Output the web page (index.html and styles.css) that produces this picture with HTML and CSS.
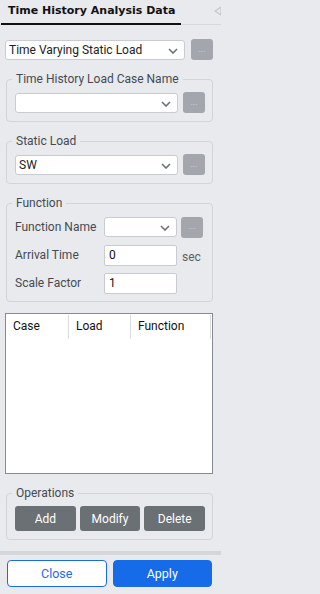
FILE: index.html
```html
<!DOCTYPE html>
<html>
<head>
<meta charset="utf-8">
<link rel="stylesheet" href="styles.css">
</head>
<body>
<div class="panel">
  <div class="tabs">
    <div class="tab">Time History Analysis Data</div>
    <svg class="collapse" width="8" height="10" viewBox="0 0 8 10"><path d="M7 1 L1 5 L7 9 Z" fill="none" stroke="#c4c7cc" stroke-width="1.2"/></svg>
  </div>

  <div class="content">
    <div class="row top-row">
      <div class="select wide">Time Varying Static Load<svg class="chev" width="10" height="6" viewBox="0 0 10 6"><path d="M1 1 L5 5 L9 1" fill="none" stroke="#6b7079" stroke-width="1.6"/></svg></div>
      <button class="dots">...</button>
    </div>

    <fieldset class="group">
      <legend>Time History Load Case Name</legend>
      <div class="row">
        <div class="select wide"><svg class="chev" width="10" height="6" viewBox="0 0 10 6"><path d="M1 1 L5 5 L9 1" fill="none" stroke="#6b7079" stroke-width="1.6"/></svg></div>
        <button class="dots">...</button>
      </div>
    </fieldset>

    <fieldset class="group">
      <legend>Static Load</legend>
      <div class="row">
        <div class="select wide">SW<svg class="chev" width="10" height="6" viewBox="0 0 10 6"><path d="M1 1 L5 5 L9 1" fill="none" stroke="#6b7079" stroke-width="1.6"/></svg></div>
        <button class="dots">...</button>
      </div>
    </fieldset>

    <fieldset class="group func">
      <legend>Function</legend>
      <div class="frow">
        <span class="lbl">Function Name</span>
        <div class="select narrow"><svg class="chev" width="10" height="6" viewBox="0 0 10 6"><path d="M1 1 L5 5 L9 1" fill="none" stroke="#6b7079" stroke-width="1.6"/></svg></div>
        <button class="dots">...</button>
      </div>
      <div class="frow">
        <span class="lbl">Arrival Time</span>
        <div class="input">0</div>
        <span class="unit">sec</span>
      </div>
      <div class="frow">
        <span class="lbl">Scale Factor</span>
        <div class="input">1</div>
      </div>
    </fieldset>

    <div class="table">
      <div class="thead">
        <div class="th c1">Case</div>
        <div class="th c2">Load</div>
        <div class="th c3">Function</div>
      </div>
    </div>

    <fieldset class="group ops">
      <legend>Operations</legend>
      <div class="btns">
        <button class="op">Add</button>
        <button class="op">Modify</button>
        <button class="op">Delete</button>
      </div>
    </fieldset>
  </div>

  <div class="footer">
    <button class="close">Close</button>
    <button class="apply">Apply</button>
  </div>
</div>
</body>
</html>
```

FILE: styles.css
```css
* { box-sizing: border-box; }
html { background: #e9eaee; }
html, body { margin: 0; padding: 0; }
body {
  background: #e9eaee;
  font-family: Roboto, "Noto Sans", sans-serif;
  font-size: 12px;
  color: #222;
  width: 221px;
  height: 594px;
  overflow: hidden;
}
.panel { display: flex; flex-direction: column; height: 594px; }
.tabs {
  display: flex;
  align-items: flex-start;
  height: 25px;
  border-bottom: 1px solid #d6d8dc;
  position: relative;
}
.tab {
  margin-left: 1px;
  width: 180px;
  height: 25px;
  padding: 4px 0 0 7px;
  font-family: "DejaVu Sans", Verdana, sans-serif;
  font-size: 11px;
  font-weight: 700;
  color: #111;
  border-bottom: 2px solid #111;
  white-space: nowrap;
}
.collapse { position: absolute; right: -1px; top: 6px; }

.content { padding: 0 8px 0 5px; flex: 1; }
.row { display: flex; align-items: center; gap: 5px; }
.top-row { margin-top: 14px; gap: 6px; }
.select {
  position: relative;
  height: 20px;
  background: #fff;
  border: 1px solid #c9cbd0;
  border-radius: 3px;
  padding: 0 0 0 3px;
  line-height: 18px;
  font-size: 12px;
  color: #222;
  white-space: nowrap;
}
.select.wide { flex: 1; }
.select.narrow { width: 73px; }
.chev { position: absolute; right: 6px; top: 7px; }
.dots {
  width: 22px;
  height: 21px;
  border: none;
  border-radius: 3px;
  background: #a3a7ad;
  color: #d4d7db;
  font-family: Roboto, sans-serif;
  font-size: 9px;
  padding: 0 0 2px 0;
  line-height: 10px;
  flex: none;
}
fieldset.group {
  margin: 11px 0 0 1px;
  border: 1px solid #d2d4d8;
  border-radius: 4px;
  padding: 5px 7px 8px 8px;
  min-width: 0;
}
legend {
  padding: 0 4px;
  margin-left: -3px;
  font-size: 12px;
  line-height: 16px;
  color: #454a52;
  white-space: nowrap;
}
.frow { display: flex; align-items: center; height: 20px; margin-bottom: 8px; }
.frow:last-child { margin-bottom: 0; }
.lbl { width: 89px; flex: none; color: #454a52; font-size: 12px; white-space: nowrap; }
.frow .dots { margin-left: 4px; }
.input {
  width: 73px;
  height: 21px;
  background: #fff;
  border: 1px solid #c9cbd0;
  border-radius: 2px;
  padding-left: 4px;
  line-height: 19px;
  font-size: 12px;
  color: #111;
}
.unit {
  margin-left: 5px;
  color: #5b6068;
  font-size: 12px;
  line-height: 16px;
  margin-top: 3px;
}
.func .frow:first-of-type { margin-top: 1px; }

.table {
  margin-top: 11px;
  height: 161px;
  background: #fff;
  border: 1px solid #868a92;
}
.thead { display: flex; height: 25px; padding-top: 1px; }
.th {
  border-right: 1px solid #dcdde0;
  padding: 4px 0 0 7px;
  font-size: 12px;
  color: #111;
}
.c1 { width: 63px; }
.c2 { width: 62px; }
.c3 { width: 80px; }

.ops { padding: 5px 6px 7px 7px; }
.btns { display: flex; gap: 4px; }
.op {
  width: 62px;
  height: 25px;
  border: none;
  border-radius: 3px;
  background: #6b7075;
  color: #fff;
  font-family: Roboto, sans-serif;
  font-size: 12px;
}

.footer {
  border-top: 4px solid #d5d6da;
  margin-top: 11px;
  padding: 5px 9px 8px 7px;
  display: flex;
  gap: 6px;
}
.footer button {
  flex: 1;
  height: 27px;
  border-radius: 4px;
  font-family: Roboto, sans-serif;
  font-size: 12.5px;
}
.close { background: #fff; border: 1px solid #1a6be6; color: #1a6be6; }
.apply { background: #156be8; border: 1px solid #156be8; color: #fff; }
```
